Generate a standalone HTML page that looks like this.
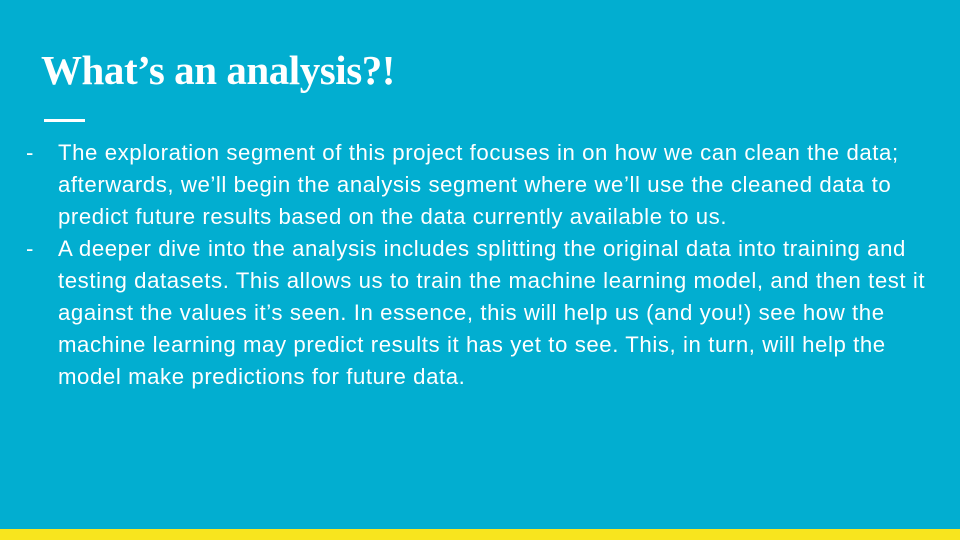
<!DOCTYPE html>
<html><head><style>
body{margin:0;width:960px;height:540px;background:#02AED0;position:relative;overflow:hidden;font-family:"Liberation Sans",sans-serif;color:#fff}
h1{position:absolute;left:41px;top:44px;margin:0;font-family:"Liberation Serif",serif;font-weight:bold;font-size:41px;letter-spacing:-0.45px;line-height:52px}
.bar{position:absolute;left:44px;top:119px;width:41px;height:3px;background:#fff}
.y{position:absolute;left:0;top:529px;width:960px;height:11px;background:#F8E51E}
ul{position:absolute;left:58px;top:137px;margin:0;padding:0;list-style:none;font-size:22.2px;line-height:32px;letter-spacing:0.58px;white-space:nowrap}
li{position:relative}
li:before{content:"-";position:absolute;left:-32px}
</style></head><body>
<h1>What’s an analysis?!</h1>
<div class="bar"></div>
<ul>
<li>The exploration segment of this project focuses in on how we can clean the data;<br>afterwards, we’ll begin the analysis segment where we’ll use the cleaned data to<br>predict future results based on the data currently available to us.</li>
<li>A deeper dive into the analysis includes splitting the original data into training and<br>testing datasets. This allows us to train the machine learning model, and then test it<br>against the values it’s seen. In essence, this will help us (and you!) see how the<br>machine learning may predict results it has yet to see. This, in turn, will help the<br>model make predictions for future data.</li>
</ul>
<div class="y"></div>
</body></html>
